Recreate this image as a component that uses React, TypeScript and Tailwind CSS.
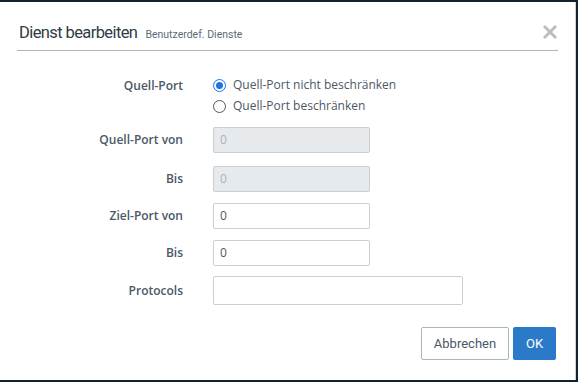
export default function App() {
  const rows = [
    { label: "Quell-Port von", value: "0", disabled: true, mt: "mt-[11px]" },
    { label: "Bis", value: "0", disabled: true, mt: "mt-[13px]" },
    { label: "Ziel-Port von", value: "0", disabled: false, mt: "mt-[11px]" },
    { label: "Bis", value: "0", disabled: false, mt: "mt-[11px]" },
  ];

  return (
    <div className="w-[578px] h-[382px] bg-[#0f2232] pt-[2px] pr-[2px] pb-[2px] font-['Open_Sans',sans-serif]">
      <div className="w-[576px] h-[378px] bg-white border-r border-[#d0d4d8] flex flex-col">
        <div className="flex items-center justify-between mx-[17px] mt-[19px] pb-[7px] border-b border-[#a7b6c3]">
          <div className="flex items-baseline gap-[8px] pl-[2px]">
            <span className="text-[16.5px] leading-[22px] text-[#2f3b45] font-['Roboto',sans-serif] tracking-[-0.6px] translate-y-[1px]">
              Dienst bearbeiten
            </span>
            <span className="text-[10.5px] text-[#5d6a75] font-['Roboto',sans-serif] translate-y-[1px]">
              Benutzerdef. Dienste
            </span>
          </div>
          <svg width="14" height="14" viewBox="0 0 14 14" className="mr-[1px]">
            <path d="M2 2 L12 12 M12 2 L2 12" stroke="#bdbdbd" strokeWidth="3" strokeLinecap="square" />
          </svg>
        </div>

        <div className="grid grid-cols-[183px_1fr] gap-x-[30px] mt-[24px] text-[12px]">
          <div className="text-right font-semibold text-[#4b5865] leading-[20px] pt-[1px]">Quell-Port</div>
          <div className="flex flex-col gap-[1px]">
            <label className="flex items-center gap-[7px] text-[#4b5865] leading-[20px]">
              <span className="w-[13px] h-[13px] rounded-full border border-[#1a73e8] flex items-center justify-center">
                <span className="w-[7px] h-[7px] rounded-full bg-[#1a73e8]" />
              </span>
              Quell-Port nicht beschränken
            </label>
            <label className="flex items-center gap-[7px] text-[#4b5865] leading-[20px]">
              <span className="w-[13px] h-[13px] rounded-full border border-[#555]" />
              Quell-Port beschränken
            </label>
          </div>

          {rows.map((row, i) => (
            <div key={i} className="contents">
              <div className={`text-right font-semibold text-[#4b5865] flex items-center justify-end h-[26px] ${row.mt}`}>
                {row.label}
              </div>
              <div className={row.mt}>
                <div
                  className={`w-[157px] h-[26px] rounded-[2px] border border-[#c9cfd5] flex items-center px-[6px] ${
                    row.disabled ? "bg-[#e7eaed] text-[#a9b1b8]" : "bg-white text-[#4b5865]"
                  }`}
                >
                  {row.value}
                </div>
              </div>
            </div>
          ))}

          <div className="text-right font-semibold text-[#4b5865] flex items-center justify-end h-[29px] mt-[10px]">
            Protocols
          </div>
          <div className="mt-[10px]">
            <div className="w-[250px] h-[29px] rounded-[2px] border border-[#c9cfd5] bg-white" />
          </div>
        </div>

        <div className="flex justify-end gap-[4px] mr-[19px] mt-[22px]">
          <button className="w-[88px] h-[33px] rounded-[2px] border border-[#a7b6c3] bg-white text-[13px] text-[#4b5865] font-['Roboto',sans-serif]">
            Abbrechen
          </button>
          <button className="w-[43px] h-[33px] rounded-[2px] bg-[#2a7ac9] text-[13px] text-white font-['Roboto',sans-serif]">
            OK
          </button>
        </div>
      </div>
    </div>
  );
}
